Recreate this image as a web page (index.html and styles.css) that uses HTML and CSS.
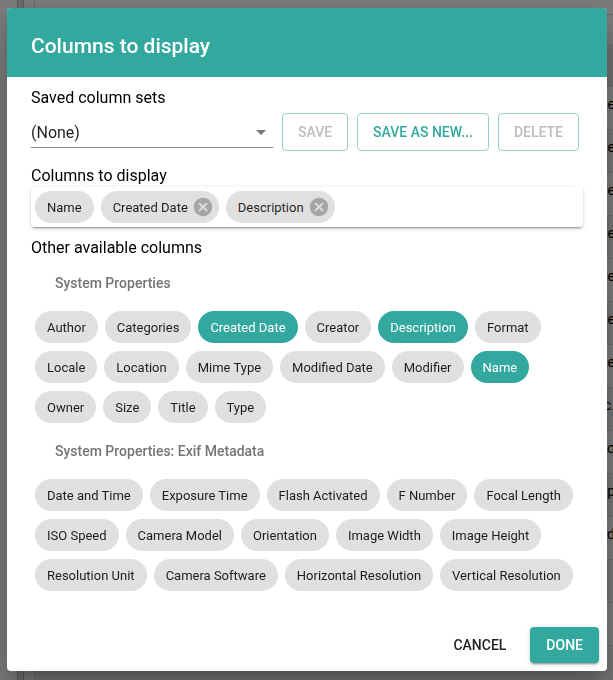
FILE: index.html
```html
<!DOCTYPE html>
<html lang="en">
<head>
<meta charset="utf-8">
<title>Columns to display</title>
<meta name="viewport" content="width=device-width, initial-scale=1">
<link rel="stylesheet" href="styles.css">
</head>
<body>
<div class="page" aria-hidden="true">
  <div class="splitter"></div>
  <div class="listing">
    <div class="toolbar"><span>g</span></div>
    <div class="row head"></div>
    <div class="row">ge</div>
    <div class="row">ge</div>
    <div class="row">ge</div>
    <div class="row">ge</div>
    <div class="row">ge</div>
    <div class="row">ge</div>
    <div class="row">ge</div>
    <div class="row">c.</div>
    <div class="row">o</div>
    <div class="row">p</div>
    <div class="row">d</div>
    <div class="row"></div>
    <div class="row"></div>
    <div class="row"></div>
  </div>
</div>
<div class="backdrop">
  <div class="dialog" role="dialog" aria-modal="true" aria-labelledby="title">
    <header class="dialog-header"><h1 id="title">Columns to display</h1></header>
    <main class="dialog-body">
      <label class="label" for="sets">Saved column sets</label>
      <div class="sets">
        <div class="select">
          <select id="sets"><option>(None)</option></select>
          <svg class="arrow" viewBox="0 0 24 24" aria-hidden="true"><path d="M7 10l5 5 5-5z"/></svg>
        </div>
        <button class="button outlined" type="button" disabled>SAVE</button>
        <button class="button outlined" type="button">SAVE AS NEW...</button>
        <button class="button outlined" type="button" disabled>DELETE</button>
      </div>
      <h2 class="label">Columns to display</h2>
      <div class="selected">
        <span class="chip">Name</span>
        <span class="chip removable">Created Date<button class="remove" type="button" aria-label="Remove Created Date"><svg viewBox="0 0 24 24"><path d="M12 2C6.47 2 2 6.47 2 12s4.470 10 10 10 10-4.470 10-10S17.530 2 12 2zm5 13.590L15.590 17 12 13.410 8.410 17 7 15.590 10.590 12 7 8.410 8.410 7 12 10.590 15.590 7 17 8.410 13.410 12 17 15.590z"/></svg></button></span>
        <span class="chip removable">Description<button class="remove" type="button" aria-label="Remove Description"><svg viewBox="0 0 24 24"><path d="M12 2C6.47 2 2 6.47 2 12s4.470 10 10 10 10-4.470 10-10S17.530 2 12 2zm5 13.590L15.590 17 12 13.410 8.410 17 7 15.590 10.590 12 7 8.410 8.410 7 12 10.590 15.590 7 17 8.410 13.410 12 17 15.590z"/></svg></button></span>
      </div>
      <h2 class="label">Other available columns</h2>
      <h3 class="group">System Properties</h3>
      <div class="chips">
        <button class="chip" type="button">Author</button>
        <button class="chip" type="button">Categories</button>
        <button class="chip active" type="button">Created Date</button>
        <button class="chip" type="button">Creator</button>
        <button class="chip active" type="button">Description</button>
        <button class="chip" type="button">Format</button>
        <button class="chip" type="button">Locale</button>
        <button class="chip" type="button">Location</button>
        <button class="chip" type="button">Mime Type</button>
        <button class="chip" type="button">Modified Date</button>
        <button class="chip" type="button">Modifier</button>
        <button class="chip active" type="button">Name</button>
        <button class="chip" type="button">Owner</button>
        <button class="chip" type="button">Size</button>
        <button class="chip" type="button">Title</button>
        <button class="chip" type="button">Type</button>
      </div>
      <h3 class="group">System Properties: Exif Metadata</h3>
      <div class="chips">
        <button class="chip" type="button">Date and Time</button>
        <button class="chip" type="button">Exposure Time</button>
        <button class="chip" type="button">Flash Activated</button>
        <button class="chip" type="button">F Number</button>
        <button class="chip" type="button">Focal Length</button>
        <button class="chip" type="button">ISO Speed</button>
        <button class="chip" type="button">Camera Model</button>
        <button class="chip" type="button">Orientation</button>
        <button class="chip" type="button">Image Width</button>
        <button class="chip" type="button">Image Height</button>
        <button class="chip" type="button">Resolution Unit</button>
        <button class="chip" type="button">Camera Software</button>
        <button class="chip" type="button">Horizontal Resolution</button>
        <button class="chip" type="button">Vertical Resolution</button>
      </div>
    </main>
    <footer class="actions">
      <button class="button" type="button">CANCEL</button>
      <button class="button primary" type="button">DONE</button>
    </footer>
  </div>
</div>
</body>
</html>
```
FILE: styles.css
```css
* { box-sizing: border-box; }

html, body { height: 100%; }

body {
  margin: 0;
  overflow: hidden;
  font-family: Roboto, "Liberation Sans", sans-serif;
  color: rgba(0, 0, 0, 0.87);
}

button, select { font: inherit; }

h1, h2, h3 { margin: 0; }

/* Page behind the dialog */
.page {
  display: flex;
  height: 100%;
  overflow: hidden;
  padding-left: 17px;
  background: #fafafa;
}

.splitter {
  flex: none;
  width: 7px;
  background: #dcdcdc;
  border: solid #b4b4b4;
  border-width: 0 1px;
}

.listing {
  flex: 1;
  margin: 0 -2px 0 10px;
  border-left: 1px solid #dcdcdc;
}

.toolbar {
  display: flow-root;
  height: 15px;
  padding-left: 20px;
  border-bottom: 1px solid #d8d8d8;
  line-height: 0;
}

.toolbar span {
  display: block;
  margin-top: -8px;
}

.row {
  display: flex;
  align-items: center;
  justify-content: flex-end;
  height: 43px;
  padding-bottom: 8px;
  font-size: 14px;
  color: #000;
  border-bottom: 1px solid #e0e0e0;
}

.row:nth-child(even) { background: #eeeeee; }

.row.head {
  height: 72px;
  background: linear-gradient(#fafafa 29px, #e6e6e6 29px);
}

/* Dialog */
.backdrop {
  position: fixed;
  inset: 0;
  display: flex;
  align-items: center;
  justify-content: center;
  padding: 8px 6px 9px 7px;
  background: rgba(0, 0, 0, 0.5);
}

.dialog {
  flex: 1;
  max-width: 600px;
  overflow: hidden;
  background: #fff;
  border-radius: 4px;
  box-shadow: 0 11px 15px -7px rgba(0, 0, 0, 0.2), 0 24px 38px 3px rgba(0, 0, 0, 0.14), 0 9px 46px 8px rgba(0, 0, 0, 0.12);
}

.dialog-header {
  padding: 24px 24px 16px;
  background: #33a89f;
  color: #fff;
}

.dialog-header h1 {
  font-size: 21px;
  font-weight: 500;
  line-height: 29px;
}

.dialog-body { padding: 8px 24px 32px; }

.label {
  display: block;
  padding-top: 2px;
  font-size: 16px;
  font-weight: 400;
  line-height: 22px;
  color: #000;
}

.sets {
  display: flex;
  gap: 9px;
  padding-right: 4px;
  margin: 4px 0 12px;
}

.select {
  position: relative;
  flex: 1;
  min-width: 0;
  margin-bottom: 3px;
  border-bottom: 1px solid #8c8c8c;
}

.select select {
  width: 100%;
  height: 100%;
  padding: 4px 24px 0 0;
  border: 0;
  background: none;
  appearance: none;
  font-size: 16px;
  color: rgba(0, 0, 0, 0.87);
}

.arrow {
  position: absolute;
  top: 7px;
  right: 0;
  width: 24px;
  height: 24px;
  fill: #757575;
  pointer-events: none;
}

.button {
  height: 36px;
  padding: 0 16px;
  border: 0;
  border-radius: 4px;
  background: none;
  font-size: 14px;
  font-weight: 500;
  color: rgba(0, 0, 0, 0.87);
  white-space: nowrap;
}

.button.outlined {
  height: 38px;
  padding: 0 15px;
  border: 1px solid #99d3cf;
  color: #33a89f;
}

.button.outlined:disabled { color: #bdbdbd; }

.button.primary {
  background: #33a89f;
  color: #fff;
  box-shadow: 0 3px 1px -2px rgba(0, 0, 0, 0.2), 0 2px 2px 0 rgba(0, 0, 0, 0.14), 0 1px 5px 0 rgba(0, 0, 0, 0.12);
}

.selected, .chips {
  display: flex;
  flex-wrap: wrap;
  gap: 8px 7px;
  padding: 4px;
}

.selected {
  margin-bottom: 8px;
  border-radius: 4px;
  box-shadow: 0 3px 1px -2px rgba(0, 0, 0, 0.2), 0 2px 2px 0 rgba(0, 0, 0, 0.14), 0 1px 5px 0 rgba(0, 0, 0, 0.12);
}

.chip {
  display: inline-flex;
  align-items: center;
  height: 32px;
  padding: 0 12px;
  border: 0;
  border-radius: 16px;
  background: #e0e0e0;
  font-size: 13px;
  color: rgba(0, 0, 0, 0.87);
  white-space: nowrap;
}

.chip.active {
  background: #33a89f;
  color: #fff;
}

.chip.removable {
  gap: 4px;
  padding-right: 5px;
}

.remove {
  display: flex;
  padding: 0;
  border: 0;
  background: none;
}

.remove svg {
  width: 22px;
  height: 22px;
  fill: #a6a6a6;
}

.group {
  padding-left: 24px;
  font-size: 14px;
  font-weight: 500;
  line-height: 48px;
  color: #757575;
}

.actions {
  display: flex;
  justify-content: flex-end;
  gap: 8px;
  padding: 0 8px 8px;
}
```
